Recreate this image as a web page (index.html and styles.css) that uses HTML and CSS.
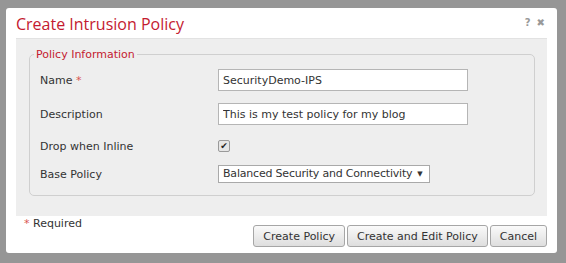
FILE: index.html
```html
<!DOCTYPE html>
<html lang="en">
<head>
    <meta charset="UTF-8">
    <title>Create Intrusion Policy</title>
    <link rel="stylesheet" href="styles.css">
</head>
<body>
    <!-- Dialog -->
    <div class="dialog">
        <div class="dialog-header">
            <div class="dialog-title">Create Intrusion Policy</div>
            <div class="dialog-tools">
                <span class="tool-help">?</span>
                <span class="tool-close">&#10006;</span>
            </div>
        </div>

        <div class="dialog-body">
            <fieldset class="policy-info">
                <legend>Policy Information</legend>
                <div class="form-row row-name">
                    <label class="form-label">Name <span class="req">*</span></label>
                    <input class="text-input" type="text" value="SecurityDemo-IPS">
                </div>
                <div class="form-row row-desc">
                    <label class="form-label">Description</label>
                    <input class="text-input" type="text" value="This is my test policy for my blog">
                </div>
                <div class="form-row row-drop">
                    <label class="form-label">Drop when Inline</label>
                    <span class="check-box">&#10004;</span>
                </div>
                <div class="form-row row-base">
                    <label class="form-label">Base Policy</label>
                    <div class="select-box">Balanced Security and Connectivity<span class="arrow">&#9660;</span></div>
                </div>
            </fieldset>
        </div>

        <div class="dialog-footer">
            <div class="required-note"><span class="req">*</span> Required</div>
            <div class="buttons">
                <button class="btn">Create Policy</button>
                <button class="btn">Create and Edit Policy</button>
                <button class="btn">Cancel</button>
            </div>
        </div>
    </div>
</body>
</html>
```

FILE: styles.css
```css
/* Global */
body, html {
    margin: 0;
    padding: 0;
}

body {
    background-color: #969696;
    padding: 8px 9px 10px 6px;
    font-family: "DejaVu Sans", Verdana, sans-serif;
    font-size: 11px;
    color: #333;
}

/* Dialog */
.dialog {
    width: 551px;
    height: 245px;
    background: #fff;
    border-radius: 3px;
    display: flex;
    flex-direction: column;
}

.dialog-header {
    height: 30px;
    display: flex;
    justify-content: space-between;
    align-items: center;
    padding: 0 12px 0 10px;
}

.dialog-title {
    font-family: "Open Sans", sans-serif;
    font-size: 16px;
    color: #c41a30;
    margin-top: 1px;
}

.dialog-tools {
    display: flex;
    gap: 6px;
    color: #999;
    font-size: 10px;
    font-weight: bold;
    margin-top: -2px;
}

/* Body panel */
.dialog-body {
    background: #eeeeee;
    margin: 0 10px;
    padding: 9px 12px 20px 13px;
    border-top: 1px solid #e2e2e2;
}

.policy-info {
    margin: 0;
    padding: 8px 9px 10px 9px;
    border: 1px solid #cfcfcf;
    border-radius: 5px;
}

.policy-info legend {
    color: #c41a30;
    padding: 0 2px;
    margin-left: -5px;
    font-size: 11px;
}

.form-row {
    display: flex;
    align-items: center;
    height: 22px;
}

.row-desc {
    margin-top: 12px;
}

.row-drop {
    margin-top: 10px;
}

.row-base {
    margin-top: 6px;
}

.form-label {
    width: 178px;
    padding-left: 1px;
}

.req {
    color: #d9534f;
}

.text-input {
    box-sizing: border-box;
    width: 250px;
    height: 22px;
    border: 1px solid #b5b5b5;
    background: #fff;
    font-family: "DejaVu Sans", Verdana, sans-serif;
    font-size: 11px;
    color: #333;
    padding: 0 4px;
    margin: 0;
}

.check-box {
    box-sizing: border-box;
    width: 12px;
    height: 12px;
    border: 1px solid #9a9a9a;
    border-radius: 2px;
    background: #e6e6e6;
    font-size: 9px;
    line-height: 10px;
    text-align: center;
    color: #222;
}

.select-box {
    box-sizing: border-box;
    height: 18px;
    line-height: 16px;
    padding: 0 6px 0 4px;
    border: 1px solid #a9a9a9;
    background: #fff;
    letter-spacing: -0.2px;
}

.select-box .arrow {
    font-size: 7px;
    margin-left: 5px;
    vertical-align: 1px;
}

/* Footer */
.dialog-footer {
    display: flex;
    justify-content: space-between;
    padding: 0 10px 0 18px;
}

.required-note {
    margin-top: 1px;
}

.buttons {
    display: flex;
    gap: 2px;
    margin-top: 9px;
}

.btn {
    height: 22px;
    padding: 0 9px;
    border: 1px solid #a6a6a6;
    border-radius: 3px;
    background: linear-gradient(#fafafa, #dedede);
    font-family: "DejaVu Sans", Verdana, sans-serif;
    font-size: 11px;
    color: #333;
    cursor: pointer;
}
```
